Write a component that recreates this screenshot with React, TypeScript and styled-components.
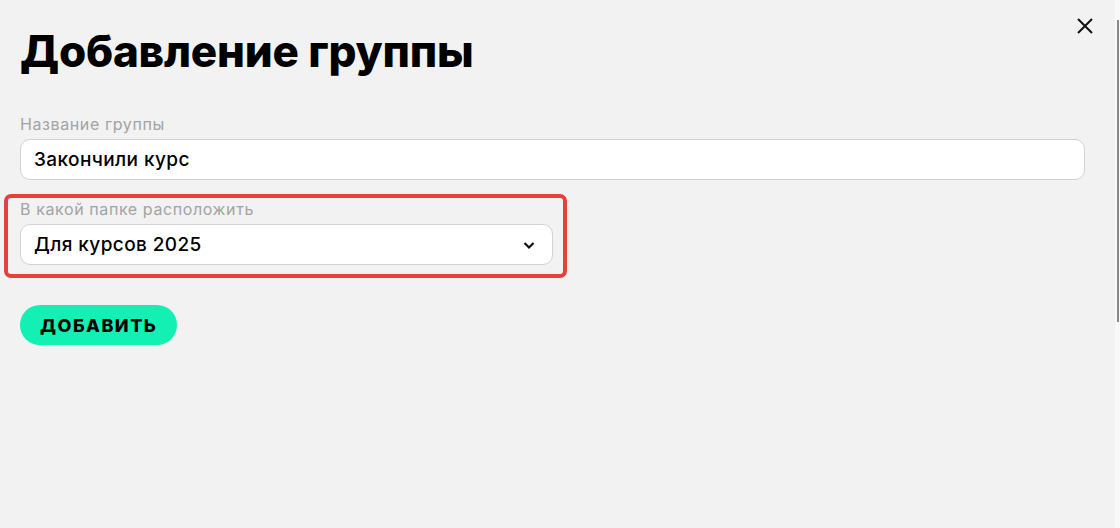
import React from "react";
import styled, { createGlobalStyle } from "styled-components";

const GlobalStyle = createGlobalStyle`
  html, body {
    margin: 0;
    padding: 0;
    background: #f2f2f2;
    font-family: Inter, "Noto Sans", sans-serif;
    color: #000;
  }
`;

const Screen = styled.div`
  display: flex;
  width: 1120px;
  height: 528px;
  overflow: hidden;
`;

const Panel = styled.div`
  flex: 1;
  position: relative;
  display: flex;
  flex-direction: column;
  align-items: flex-start;
  padding: 26px 30px 0 20px;
  box-sizing: border-box;
`;

const Title = styled.h1`
  margin: 0 0 38px;
  font-size: 44px;
  line-height: 50px;
  font-weight: 800;
  letter-spacing: -0.2px;
`;

const CloseButton = styled.button`
  position: absolute;
  top: 14px;
  right: 18px;
  width: 24px;
  height: 24px;
  padding: 0;
  border: none;
  background: none;
  display: flex;
  align-items: center;
  justify-content: center;
  cursor: pointer;
`;

const Field = styled.div<{ $width?: number }>`
  display: flex;
  flex-direction: column;
  gap: 5px;
  width: ${(p) => (p.$width ? `${p.$width}px` : "100%")};
`;

const Highlight = styled.div`
  position: relative;
  margin-top: 19px;
  &::after {
    content: "";
    position: absolute;
    left: -16px;
    right: -14px;
    top: -5px;
    bottom: -13px;
    border: 4px solid #e5403a;
    border-radius: 7px;
    pointer-events: none;
  }
`;

const Label = styled.label`
  font-size: 16px;
  line-height: 20px;
  letter-spacing: 0.6px;
  color: #a3a3a3;
`;

const Box = styled.div`
  height: 41px;
  box-sizing: border-box;
  border: 1px solid #d3d3d3;
  border-radius: 10px;
  background: #fff;
  display: flex;
  align-items: center;
  justify-content: space-between;
  padding: 0 16px 0 13px;
  font-size: 19px;
  font-weight: 500;
  letter-spacing: 0.4px;
`;

const SubmitButton = styled.button`
  margin-top: 40px;
  height: 40px;
  padding: 0 20px;
  border: none;
  border-radius: 20px;
  background: #13f0b3;
  font-family: Inter, "Noto Sans", sans-serif;
  font-size: 18px;
  font-weight: 800;
  letter-spacing: 1.5px;
  color: #000;
  cursor: pointer;
`;

const Scrollbar = styled.div`
  width: 5px;
  background: #f8f8f8;
  position: relative;
  &::before {
    content: "";
    position: absolute;
    right: 1px;
    top: 20px;
    height: 302px;
    width: 2px;
    background: #8a8a8a;
  }
`;

export default function App() {
  return (
    <>
      <GlobalStyle />
      <Screen>
        <Panel>
          <CloseButton aria-label="Закрыть">
            <svg width="18" height="18" viewBox="0 0 18 18">
              <path d="M2 2 L16 16 M16 2 L2 16" stroke="#111" strokeWidth="2" fill="none" />
            </svg>
          </CloseButton>
          <Title>Добавление группы</Title>
          <Field>
            <Label>Название группы</Label>
            <Box>Закончили курс</Box>
          </Field>
          <Highlight>
            <Field $width={533}>
              <Label>В какой папке расположить</Label>
              <Box>
                Для курсов 2025
                <svg width="14" height="14" viewBox="0 0 14 14">
                  <path d="M2.5 5 L7 9.5 L11.5 5" stroke="#111" strokeWidth="2.2" fill="none" />
                </svg>
              </Box>
            </Field>
          </Highlight>
          <SubmitButton>ДОБАВИТЬ</SubmitButton>
        </Panel>
        <Scrollbar />
      </Screen>
    </>
  );
}
